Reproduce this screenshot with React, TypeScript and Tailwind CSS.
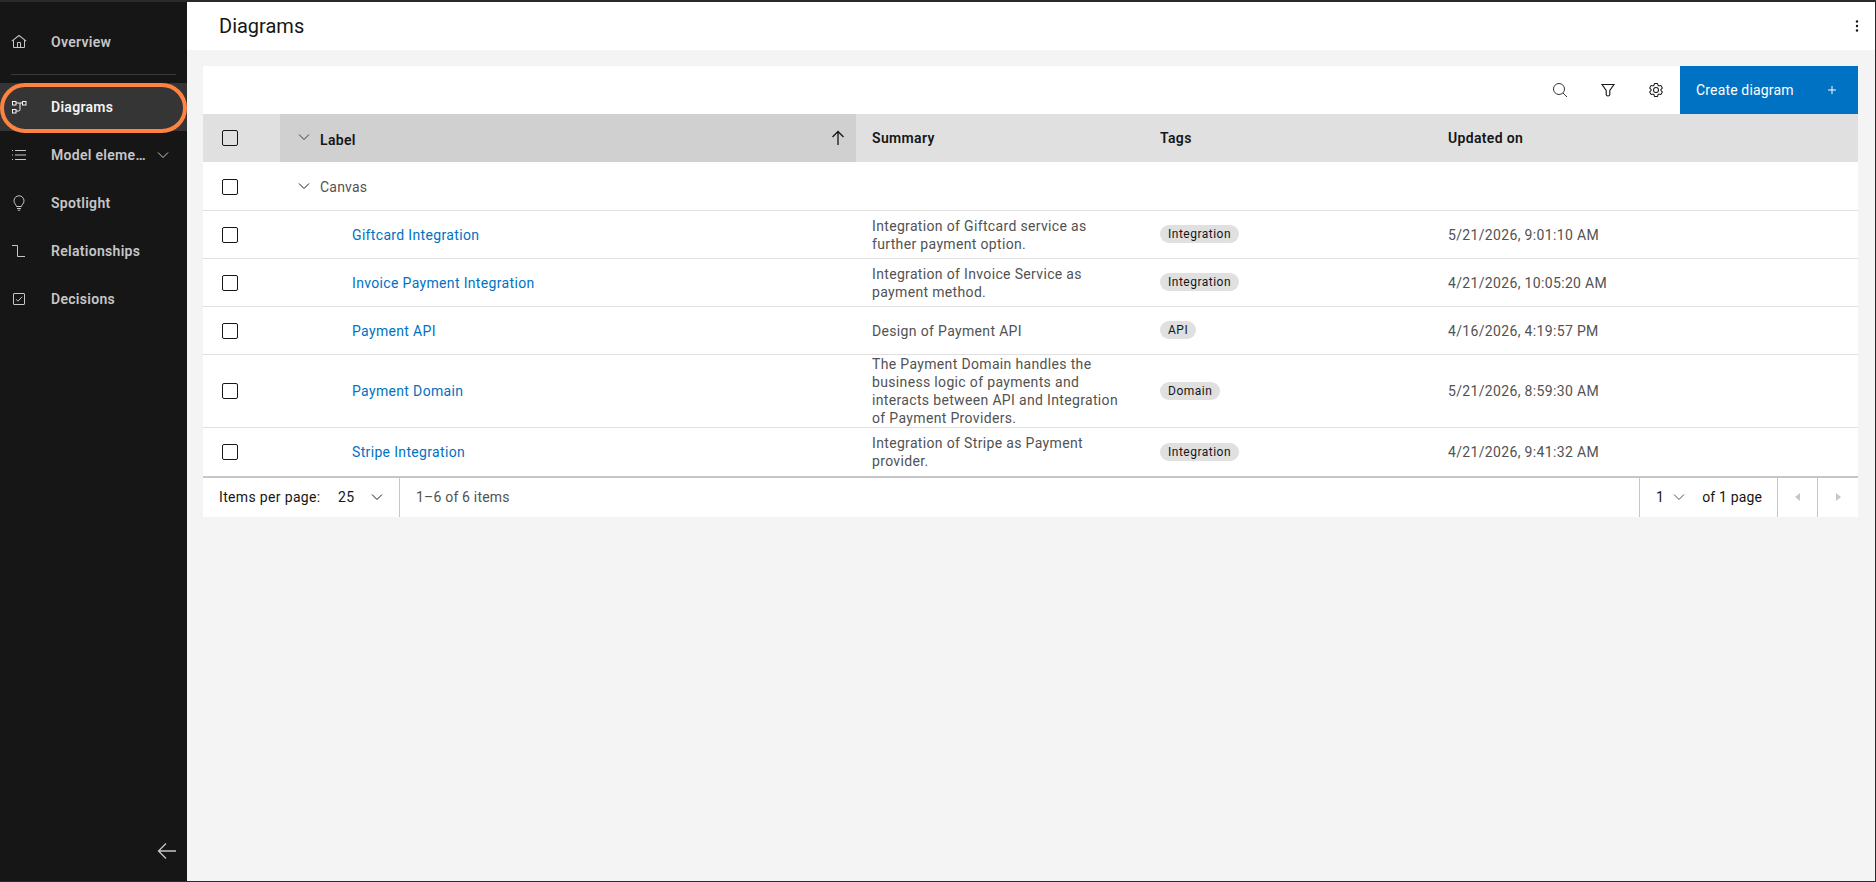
import React from 'react';

const iconClass = 'w-4 h-4 shrink-0';

const HomeIcon = () => (
  <svg viewBox="0 0 32 32" className={iconClass} fill="currentColor">
    <path d="M16.6123,2.2138a1.01,1.01,0,0,0-1.2427,0L1,13.4194l1.2427,1.5717L4,13.6209V26a2.0041,2.0041,0,0,0,2,2H26a2.0037,2.0037,0,0,0,2-2V13.63L29.7573,15,31,13.4282ZM18,26H14V18h4Zm2,0V18a2.0023,2.0023,0,0,0-2-2H14a2.0023,2.0023,0,0,0-2,2v8H6V12.0615l10-7.79,10,7.8005V26Z" />
  </svg>
);

const DiagramIcon = () => (
  <svg viewBox="0 0 16 16" className={iconClass} fill="none" stroke="currentColor" strokeWidth="1">
    <rect x="1.5" y="2.5" width="3.5" height="3.5" />
    <rect x="11.5" y="2.5" width="3.5" height="3.5" />
    <rect x="1.5" y="10.5" width="3.5" height="3.5" />
    <path d="M5 4H11.5M9 4V10.5Q9 12 7.5 12H5" />
  </svg>
);

const ListIcon = () => (
  <svg viewBox="0 0 16 16" className={iconClass} fill="none" stroke="currentColor" strokeWidth="1">
    <path d="M4 3.5H15M4 8H15M4 12.5H15" />
    <path d="M1 3.5H2M1 8H2M1 12.5H2" />
  </svg>
);

const BulbIcon = () => (
  <svg viewBox="0 0 16 16" className={iconClass} fill="none" stroke="currentColor" strokeWidth="1">
    <path d="M5.5 11.5C5.5 9.8 3 8.8 3 5.8A5 5 0 0 1 13 5.8C13 8.8 10.5 9.8 10.5 11.5Z" />
    <path d="M6 13.5H10M6.8 15.2H9.2" />
  </svg>
);

const RelationIcon = () => (
  <svg viewBox="0 0 16 16" className={iconClass} fill="none" stroke="currentColor" strokeWidth="1">
    <path d="M1 2.5H6.5V13.5H14" />
  </svg>
);

const DecisionIcon = () => (
  <svg viewBox="0 0 16 16" className={iconClass} fill="none" stroke="currentColor" strokeWidth="1">
    <rect x="2.5" y="2.5" width="11" height="11" rx="0.5" />
    <path d="M5 8.2L7 10.2L11 5.8" />
  </svg>
);

const Chevron = ({ className }: { className: string }) => (
  <svg viewBox="0 0 16 16" className={className} fill="none" stroke="currentColor" strokeWidth="1">
    <path d="M3 5.5L8 10.5L13 5.5" />
  </svg>
);

const SearchIcon = () => (
  <svg viewBox="0 0 16 16" className={iconClass} fill="none" stroke="#393939" strokeWidth="1">
    <circle cx="7" cy="7" r="5.5" />
    <path d="M11 11L15 15" />
  </svg>
);

const FilterIcon = () => (
  <svg viewBox="0 0 16 16" className={iconClass} fill="none" stroke="#161616" strokeWidth="1.1">
    <path d="M2 2.5H14L9.8 8.5V12.5Q9.8 14 8 14Q6.2 14 6.2 12.5V8.5Z" />
  </svg>
);

const GearIcon = () => (
  <svg viewBox="0 0 32 32" className={iconClass} fill="#161616">
    <path d="M27,16.76c0-.25,0-.5,0-.76s0-.51,0-.77l1.92-1.68A2,2,0,0,0,29.3,11L26.94,7a2,2,0,0,0-1.73-1,2,2,0,0,0-.64.1l-2.43.82a11.35,11.35,0,0,0-1.31-.75l-.51-2.52a2,2,0,0,0-2-1.61H13.64a2,2,0,0,0-2,1.61l-.51,2.52a11.48,11.48,0,0,0-1.32.75L7.43,6.06A2,2,0,0,0,6.79,6,2,2,0,0,0,5.06,7L2.7,11a2,2,0,0,0,.41,2.51L5,15.24c0,.25,0,.5,0,.76s0,.51,0,.77L3.11,18.45A2,2,0,0,0,2.7,21L5.06,25a2,2,0,0,0,1.73,1,2,2,0,0,0,.64-.1l2.43-.82a11.35,11.35,0,0,0,1.31.75l.51,2.52a2,2,0,0,0,2,1.61h4.72a2,2,0,0,0,2-1.61l.51-2.52a11.48,11.48,0,0,0,1.32-.75l2.42.82a2,2,0,0,0,.64.1,2,2,0,0,0,1.73-1L29.3,21a2,2,0,0,0-.41-2.51ZM25.21,24l-3.43-1.16a8.86,8.86,0,0,1-2.71,1.57L18.36,28H13.64l-.71-3.55a9.36,9.36,0,0,1-2.7-1.57L6.79,24,4.43,20l2.72-2.4a8.9,8.9,0,0,1,0-3.13L4.43,12,6.79,8l3.43,1.16a8.86,8.86,0,0,1,2.71-1.57L13.64,4h4.72l.71,3.55a9.36,9.36,0,0,1,2.7,1.57L25.21,8,27.57,12l-2.72,2.4a8.9,8.9,0,0,1,0,3.13L27.57,20Z" />
    <path d="M16,22a6,6,0,1,1,6-6A5.94,5.94,0,0,1,16,22Zm0-10a3.91,3.91,0,0,0-4,4,3.91,3.91,0,0,0,4,4,3.91,3.91,0,0,0,4-4A3.91,3.91,0,0,0,16,12Z" />
  </svg>
);

const Checkbox = () => <span className="block w-4 h-4 border border-[#161616] rounded-[2px] bg-transparent" />;

const navItems = [
  { label: 'Diagrams', icon: <DiagramIcon />, active: true },
  { label: 'Model elements', icon: <ListIcon />, expandable: true },
  { label: 'Spotlight', icon: <BulbIcon /> },
  { label: 'Relationships', icon: <RelationIcon /> },
  { label: 'Decisions', icon: <DecisionIcon /> },
];

const rows = [
  {
    label: 'Giftcard Integration',
    summary: 'Integration of Giftcard service as further payment option.',
    tag: 'Integration',
    updated: '5/21/2026, 9:01:10 AM',
    height: 'h-12',
  },
  {
    label: 'Invoice Payment Integration',
    summary: 'Integration of Invoice Service as payment method.',
    tag: 'Integration',
    updated: '4/21/2026, 10:05:20 AM',
    height: 'h-12',
  },
  {
    label: 'Payment API',
    summary: 'Design of Payment API',
    tag: 'API',
    updated: '4/16/2026, 4:19:57 PM',
    height: 'h-12',
  },
  {
    label: 'Payment Domain',
    summary: 'The Payment Domain handles the business logic of payments and interacts between API and Integration of Payment Providers.',
    tag: 'Domain',
    updated: '5/21/2026, 8:59:30 AM',
    height: 'h-[73px]',
  },
  {
    label: 'Stripe Integration',
    summary: 'Integration of Stripe as Payment provider.',
    tag: 'Integration',
    updated: '4/21/2026, 9:41:32 AM',
    height: 'h-[49px]',
  },
];

const App: React.FC = () => {
  return (
    <div className="h-screen flex flex-col overflow-hidden bg-[#f4f4f4] border-t-2 border-b border-r border-[#2a2a2a] font-['Roboto',sans-serif] text-sm tracking-[0.34px] text-[#161616]">
      <div className="flex flex-1 min-h-0">
        <aside className="w-[187px] shrink-0 bg-[#161616] text-[#c6c6c6] font-semibold tracking-[0.3px] flex flex-col">
          <div className="h-[72px] shrink-0 flex items-center pt-[8px]">
            <div className="w-[51px] pl-[11px] flex">
              <HomeIcon />
            </div>
            <span>Overview</span>
          </div>
          <div className="mx-[11px] h-px bg-[#393939] shrink-0" />
          <div className="h-[8px] shrink-0" />
          {navItems.map((item) => (
            <div
              key={item.label}
              className={`h-12 shrink-0 flex items-center relative ${item.active ? 'bg-[#353535] text-[#f4f4f4]' : ''}`}
            >
              {item.active && (
                <span className="absolute left-0 right-0 top-0 bottom-[-2px] rounded-full border-4 border-[#ff8340]" />
              )}
              <div className="w-[51px] pl-[11px] flex">{item.icon}</div>
              <span className="truncate max-w-[99px]">{item.label}</span>
              {item.expandable && <Chevron className="w-4 h-4 ml-[5px]" />}
            </div>
          ))}
          <div className="mt-auto h-[60px] flex justify-end items-center pr-[10px]">
            <svg viewBox="0 0 20 20" className="w-5 h-5" fill="none" stroke="#c6c6c6" strokeWidth="1.3">
              <path d="M19 10H1.5M9 2.5L1.5 10L9 17.5" />
            </svg>
          </div>
        </aside>

        <main className="flex-1 min-w-0 flex flex-col">
          <header className="h-12 shrink-0 bg-white flex items-center justify-between pl-8 pr-[16px]">
            <h1 className="text-[20px] leading-7 font-normal tracking-normal">Diagrams</h1>
            <svg viewBox="0 0 4 16" className="w-1 h-4" fill="#161616">
              <circle cx="2" cy="3.5" r="1.2" />
              <circle cx="2" cy="8" r="1.2" />
              <circle cx="2" cy="12.5" r="1.2" />
            </svg>
          </header>

          <div className="pt-4 pl-4 pr-[17px]">
            <div className="bg-white">
              <div className="h-12 flex justify-end">
                <button className="w-12 flex items-center justify-center"><SearchIcon /></button>
                <button className="w-12 flex items-center justify-center"><FilterIcon /></button>
                <button className="w-12 flex items-center justify-center"><GearIcon /></button>
                <button className="w-[178px] bg-[#0072c3] text-white tracking-[0.16px] flex items-center justify-between pl-4 pr-[18px]">
                  <span>Create diagram</span>
                  <svg viewBox="0 0 16 16" className="w-4 h-4" fill="none" stroke="currentColor" strokeWidth="1">
                    <path d="M8 4V12M4 8H12" />
                  </svg>
                </button>
              </div>

              <div className="h-12 flex bg-[#e0e0e0] font-semibold">
                <div className="w-[77px] shrink-0 flex items-center pl-[19px]"><Checkbox /></div>
                <div className="w-[576px] shrink-0 bg-[#d0d0d0] flex items-center pl-4 pr-[10px]">
                  <Chevron className="w-4 h-4 mr-[8px] -mt-[3px] text-[#393939]" />
                  <span className="mt-[4px]">Label</span>
                  <svg viewBox="0 0 16 16" className="w-4 h-4 ml-auto" fill="none" stroke="#161616" strokeWidth="1.3">
                    <path d="M8 15V1.5M2.5 7L8 1.5L13.5 7" />
                  </svg>
                </div>
                <div className="w-[288px] shrink-0 flex items-center pl-4">Summary</div>
                <div className="w-[288px] shrink-0 flex items-center pl-4">Tags</div>
                <div className="flex-1 flex items-center pl-4">Updated on</div>
              </div>

              <div className="h-12 flex items-center pt-[2px]">
                <div className="w-[77px] shrink-0 pl-[19px]"><Checkbox /></div>
                <div className="pl-4 flex items-center text-[#525252] tracking-[0.2px]">
                  <Chevron className="w-4 h-4 mr-[8px] -mt-[2px] text-[#161616]" />
                  <span>Canvas</span>
                </div>
              </div>

              {rows.map((row) => (
                <div key={row.label} className={`${row.height} flex items-center border-t border-[#e0e0e0]`}>
                  <div className="w-[77px] shrink-0 pl-[19px]"><Checkbox /></div>
                  <div className="w-[576px] shrink-0 pl-[72px] text-[#0072c3]">{row.label}</div>
                  <div className="w-[288px] shrink-0 pl-4 pr-4 leading-[18px] text-[#525252]">{row.summary}</div>
                  <div className="w-[288px] shrink-0 pl-4 flex -mt-px">
                    <span className="inline-flex h-[18px] items-center rounded-full bg-[#e0e0e0] px-2 text-xs tracking-[0.5px]">{row.tag}</span>
                  </div>
                  <div className="flex-1 pl-4 text-[#525252]">{row.updated}</div>
                </div>
              ))}

              <div className="h-[41px] flex items-stretch border-t-2 border-[#c6c6c6]">
                <div className="w-[197px] shrink-0 flex items-center pl-4 pb-[2px] border-r border-[#c6c6c6]">
                  <span className="w-[119px]">Items per page:</span>
                  <span className="w-[31px]">25</span>
                  <Chevron className="w-4 h-4" />
                </div>
                <div className="flex-1 flex items-center pl-4 pb-[2px] text-[#525252] tracking-[0.2px]">1–6 of 6 items</div>
                <div className="w-[138px] flex items-center pl-4 pb-[2px] border-l border-[#c6c6c6]">
                  <span>1</span>
                  <Chevron className="w-4 h-4 ml-[7px] text-[#525252]" />
                  <span className="ml-[15px] tracking-[0.16px]">of 1 page</span>
                </div>
                <div className="w-[40px] flex items-center justify-center pb-[2px] border-l border-[#c6c6c6]">
                  <span className="border-y-[4px] border-r-[5px] border-y-transparent border-r-[#c6c6c6]" />
                </div>
                <div className="w-[41px] flex items-center justify-center pb-[2px] border-l border-[#c6c6c6]">
                  <span className="border-y-[4px] border-l-[5px] border-y-transparent border-l-[#c6c6c6]" />
                </div>
              </div>
            </div>
          </div>
        </main>
      </div>
    </div>
  );
};

export default App;
